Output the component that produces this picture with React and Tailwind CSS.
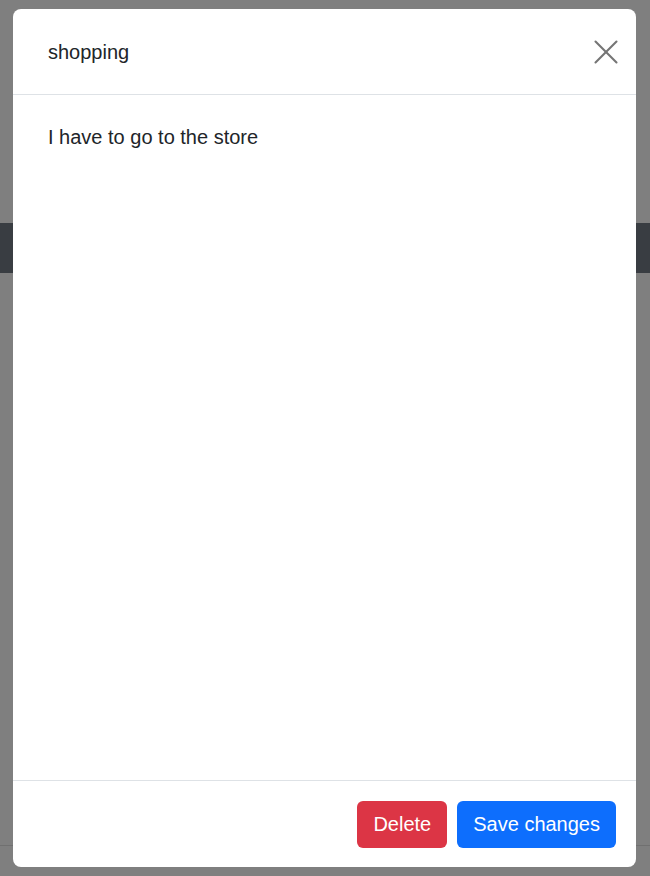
import { X } from "lucide-react"

function NoteModal({ title, text }) {
    return (
        <div className="absolute left-[13px] top-[9px] w-[623px] h-[858px] bg-white rounded-lg flex flex-col overflow-hidden">
            <div className="h-[86px] flex items-center justify-between pl-[35px] pr-[9px] border-b border-[#dee2e6]">
                <h5 className="text-[20px] leading-[30px] text-[#212529]">{title}</h5>
                <button className="w-[42px] h-[42px] flex items-center justify-center text-[#757575]">
                    <X size={42} strokeWidth={1.2} />
                </button>
            </div>
            <div className="flex-1 px-[35px] pt-[27px]">
                <p className="text-[20px] leading-[30px] text-[#212529]">{text}</p>
            </div>
            <div className="h-[87px] border-t border-[#dee2e6] flex items-center justify-end gap-[10px] pr-[20px]">
                <button className="h-[47px] px-[16px] rounded-[6px] bg-[#dc3545] text-white text-[20px]">Delete</button>
                <button className="h-[47px] px-[16px] rounded-[6px] bg-[#0d6efd] text-white text-[20px]">Save changes</button>
            </div>
        </div>
    )
}

export default function App() {
    return (
        <div className="relative w-[650px] h-[876px] bg-[#7f7f7f] overflow-hidden font-['Liberation_Sans',Arial,sans-serif]">
            <div className="h-[223px]" />
            <div className="h-[50px] bg-[#393d42]" />
            <div className="h-[573px] border-b border-[#707070]" />
            <NoteModal title="shopping" text="I have to go to the store" />
        </div>
    )
}
